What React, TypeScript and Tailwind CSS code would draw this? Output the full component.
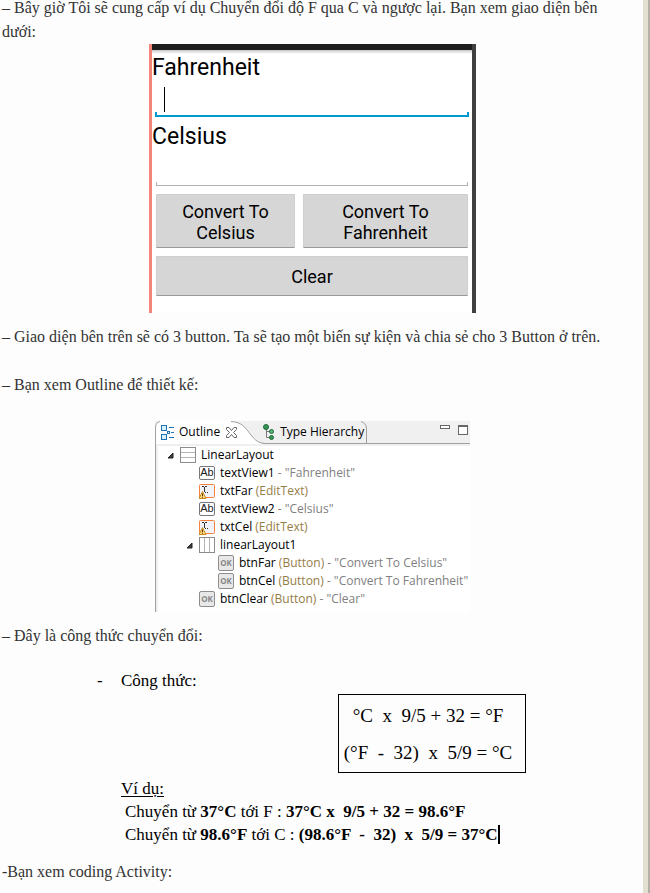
import type { ReactNode } from "react";

type IconName = "rows" | "columns" | "text" | "edit" | "button";

type OutlineNode = {
  name: string;
  kind?: string;
  text?: string;
  icon: IconName;
  indent: string;
  open?: boolean;
};

const nodes: OutlineNode[] = [
  { name: "LinearLayout", icon: "rows", indent: "pl-2", open: true },
  { name: "textView1", text: "Fahrenheit", icon: "text", indent: "pl-[27px]" },
  { name: "txtFar", kind: "EditText", icon: "edit", indent: "pl-[27px]" },
  { name: "textView2", text: "Celsius", icon: "text", indent: "pl-[27px]" },
  { name: "txtCel", kind: "EditText", icon: "edit", indent: "pl-[27px]" },
  { name: "linearLayout1", icon: "columns", indent: "pl-[27px]", open: true },
  { name: "btnFar", kind: "Button", text: "Convert To Celsius", icon: "button", indent: "pl-[46px]" },
  { name: "btnCel", kind: "Button", text: "Convert To Fahrenheit", icon: "button", indent: "pl-[46px]" },
  { name: "btnClear", kind: "Button", text: "Clear", icon: "button", indent: "pl-[27px]" },
];

function NodeIcon({ name }: { name: IconName }) {
  if (name === "text") {
    return (
      <span className="flex h-[14px] w-4 shrink-0 items-center justify-center rounded-[2px] border border-[#77777f] bg-white pb-px font-['Liberation_Sans',sans-serif] text-[11px] leading-none text-[#222]">
        Ab
      </span>
    );
  }
  if (name === "button") {
    return (
      <span className="flex size-4 shrink-0 items-center justify-center rounded-[2px] border border-[#8d8d8d] bg-[#e8e8e8] text-[8px] leading-none font-bold text-[#888]">
        OK
      </span>
    );
  }
  if (name === "edit") {
    return (
      <svg className="size-4 shrink-0" viewBox="0 0 16 16" aria-hidden="true">
        <rect x="0.5" y="1.5" width="15" height="13" rx="1" fill="#f2f3fa" stroke="#f5823a" />
        <path d="M3 3.5h2M6 3.5h2M5.5 4v5M6 9.5h1M8 9.5h1" stroke="#333" fill="none" />
        <path d="M3.5 8.5 7 15.500H0z" fill="#fbd67a" stroke="#c98a1f" strokeLinejoin="round" />
        <path d="M3.5 10.500v2.500M3.500 13.700v1" stroke="#5c3a00" />
      </svg>
    );
  }
  return (
    <svg className="size-4 shrink-0" viewBox="0 0 16 16" aria-hidden="true" shapeRendering="crispEdges">
      <rect x="0.5" y="0.5" width="15" height="15" fill="#fff" stroke="#8c8c8c" />
      {name === "rows" ? (
        <path d="M1 5.5h14M1 10.5h14" stroke="#b4b4b4" />
      ) : (
        <path d="M5.5 1v14M10.5 1v14" stroke="#b4b4b4" />
      )}
    </svg>
  );
}

function OutlineRow({ node }: { node: OutlineNode }) {
  return (
    <li className={`flex h-[18px] items-center whitespace-pre ${node.indent}`}>
      <svg className="mr-[6px] size-[7px] shrink-0" viewBox="0 0 7 7" aria-hidden="true">
        {node.open && <path d="M6 1v5H1z" fill="#404040" stroke="#222" />}
      </svg>
      <NodeIcon name={node.icon} />
      <span className="ml-[5px] text-black">{node.name}</span>
      {node.kind && <span className="text-[#957d47]"> ({node.kind})</span>}
      {node.text && <span className="text-[#808080]"> - "{node.text}"</span>}
    </li>
  );
}

function OutlineView() {
  return (
    <section className="h-[191px] w-[315px] bg-white font-['Open_Sans','Noto_Sans',sans-serif] text-[12px] leading-[18px]">
      <div className="relative flex h-[23px] items-center border-b border-[#a0a0a0] bg-[#f0f0f0]">
        <svg className="absolute top-0 left-0 h-[23px] w-[214px]" viewBox="0 0 214 23" aria-hidden="true">
          <path d="M0 23V6Q1 1 6 0H76C88 1 91 8 96 14S103 22 111 23z" fill="#fff" />
          <path
            d="M0.5 23V6Q1 1 5 0.5M76 0.5C88 1 91 8 96 14S103 22 111 22.5M206 0.5Q211 2 211.5 7V23"
            fill="none"
            stroke="#a0a0a0"
          />
        </svg>
        <button className="relative ml-[6px] flex items-center text-black">
          <svg className="mr-1 h-[15px] w-[14px]" viewBox="0 0 14 15" aria-hidden="true" shapeRendering="crispEdges">
            <path d="M0.5 0.5h5v5h-5zM0.5 9.5h5v5h-5z" fill="#d9f0fb" stroke="#1b73b4" />
            <path d="M8 2.5h5M8 12.5h5M10 7.5h3" stroke="#1b73b4" />
            <path d="M6.5 6.5h2v2h-2z" fill="#fff" stroke="#1b73b4" />
          </svg>
          Outline
          <svg className="ml-[6px] size-[11px]" viewBox="0 0 11 11" aria-hidden="true">
            <path
              d="M0.5 0.5h2.5l2.5 3 2.5-3h2.5v2l-3 3 3 3v2H8l-2.5-3-2.5 3H0.5v-2l3-3-3-3z"
              fill="#fff"
              stroke="#666"
            />
          </svg>
        </button>
        <button className="relative ml-[26px] flex items-center text-black">
          <svg className="mr-[5px] h-4 w-3" viewBox="0 0 12 16" aria-hidden="true">
            <path d="M3.5 3v10.5H8M3.5 7.5H8" fill="none" stroke="#777" />
            <circle cx="3" cy="3" r="2.5" fill="#379653" stroke="#1e6b38" />
            <circle cx="8.5" cy="7.5" r="2" fill="#5cb574" stroke="#1e6b38" />
            <circle cx="8.5" cy="13.5" r="2" fill="#379653" stroke="#1e6b38" />
          </svg>
          Type Hierarchy
        </button>
        <div className="absolute top-1 right-[2px] flex items-start gap-2">
          <button aria-label="Minimize" className="h-1 w-[10px] border border-[#666] bg-white" />
          <button aria-label="Maximize" className="h-[10px] w-[10px] border border-t-2 border-[#666] bg-white" />
        </div>
      </div>
      <div className="h-[168px] border-l border-[#a0a0a0]">
        <ul className="h-full border-t-2 border-l-2 border-[#f0f0f0] pl-px">
          {nodes.map((node) => (
            <OutlineRow key={node.name} node={node} />
          ))}
        </ul>
      </div>
    </section>
  );
}

function PhoneButton({ children, className = "" }: { children: ReactNode; className?: string }) {
  return (
    <button
      className={`rounded-[1px] border border-[#cfcfcf] border-b-[#999] bg-[#d6d6d6] pt-px text-[18px] leading-[21px] text-black ${className}`}
    >
      {children}
    </button>
  );
}

function PhoneForm() {
  return (
    <form className="h-[269px] w-[327px] border-r-4 border-l-[3px] border-r-[#404040] border-l-[#f4857a] bg-white font-[Roboto,sans-serif] text-[23px] leading-7 text-black">
      <div className="h-[6px] bg-[#1d1d1d]" />
      <div className="h-1 bg-linear-to-b from-[#c8c8c8] to-white" />
      <label htmlFor="far" className="block">
        Fahrenheit
      </label>
      <div className="relative mx-[3px] h-[35px]">
        <input id="far" className="block h-[35px] w-full px-2 outline-none" />
        <span className="absolute top-[5px] left-[9px] h-[25px] w-px bg-black" />
        <span className="absolute inset-x-0 bottom-0 h-[5px] border-x-2 border-b-2 border-[#0099cc]" />
      </div>
      <label htmlFor="cel" className="mt-[6px] block">
        Celsius
      </label>
      <div className="relative mx-1 h-[35px]">
        <input id="cel" className="block h-[35px] w-full px-2 outline-none" />
        <span className="absolute inset-x-0 bottom-0 h-1 border-x border-b border-[#b0b0b0]" />
      </div>
      <div className="mx-1 mt-2 flex gap-2">
        <PhoneButton className="h-[54px] w-[139px] px-5">Convert To Celsius</PhoneButton>
        <PhoneButton className="h-[54px] flex-1 px-8">Convert To Fahrenheit</PhoneButton>
      </div>
      <div className="mx-1 mt-2 flex">
        <PhoneButton className="h-10 flex-1">Clear</PhoneButton>
      </div>
    </form>
  );
}

function Formula() {
  return (
    <section className="w-[431px] pr-[2px] text-[17px] leading-[23px] text-black">
      <p className="flex">
        <span className="w-6">-</span>
        Công thức:
      </p>
      <div className="mt-[2px] ml-auto flex h-[79px] w-[188px] flex-col justify-center border border-black pr-2 text-center text-[19px] leading-[37px] whitespace-pre">
        <p>°C  x  9/5 + 32 = °F</p>
        <p>(°F  -  32)  x  5/9 = °C</p>
      </div>
      <div className="mt-1 pl-6 whitespace-pre">
        <p className="underline underline-offset-2">Ví dụ:</p>
        <p className="pl-1">
          Chuyển từ <b>37°C</b> tới F : <b>37°C x  9/5 + 32 = 98.6°F</b>
        </p>
        <p className="flex items-center pl-1">
          <span>
            Chuyển từ <b>98.6°F</b> tới C : <b>(98.6°F  -  32)  x  5/9 = 37°C</b>
          </span>
          <span className="h-[19px] w-[2px] bg-black" />
        </p>
      </div>
    </section>
  );
}

export default function App() {
  return (
    <main className="flex h-screen overflow-hidden bg-[#fdfdfd] font-['Liberation_Serif',serif] text-[16px] leading-6 text-[#333]">
      <article className="-mt-1 min-w-0 flex-1 pr-5 pl-[2px]">
        <p>
          – Bây giờ Tôi sẽ cung cấp ví dụ Chuyển đổi độ F qua C và ngược lại. Bạn xem giao diện bên dưới:
        </p>
        <div className="flex justify-center">
          <PhoneForm />
        </div>
        <p className="mt-3">
          – Giao diện bên trên sẽ có 3 button. Ta sẽ tạo một biến sự kiện và chia sẻ cho 3 Button ở trên.
        </p>
        <p className="mt-6">– Bạn xem Outline để thiết kế:</p>
        <div className="mt-6 flex justify-center">
          <OutlineView />
        </div>
        <p className="mt-3">– Đây là công thức chuyển đổi:</p>
        <div className="mt-[21px] flex justify-center">
          <Formula />
        </div>
        <p className="mt-[14px]">-Bạn xem coding Activity:</p>
      </article>
      <div className="w-[7px] border-r-2 border-[#b3b0a6] bg-[#e3dfd1]" />
    </main>
  );
}
